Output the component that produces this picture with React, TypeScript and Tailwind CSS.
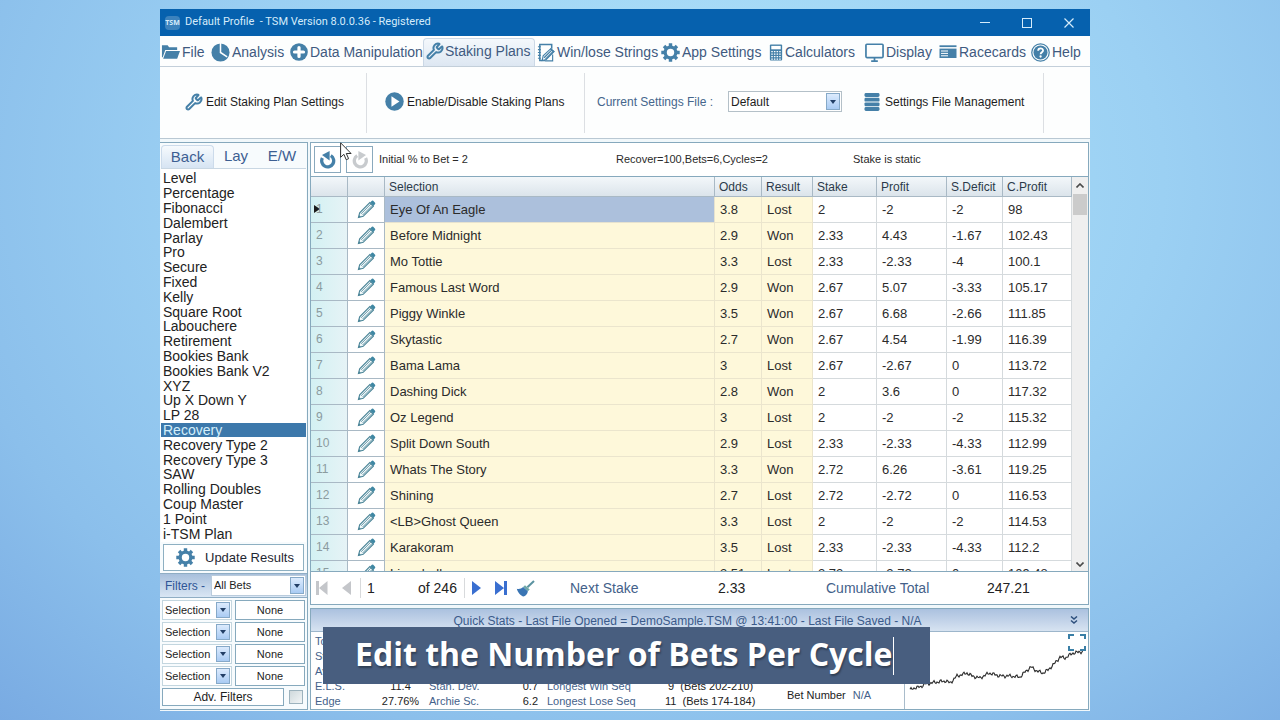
import React from "react";
import { Wrench } from "lucide-react";

type IconProps = { className?: string };

const FolderIcon = ({ className }: IconProps) => (
  <svg viewBox="0 0 20 16" className={className} fill="currentColor" aria-hidden="true">
    <path d="M1 1h6l1.500 2H17v3H4.500L1.800 13.500H1z" />
    <path d="M5.300 7H20l-3 8H2.300z" />
  </svg>
);

const PieIcon = ({ className }: IconProps) => (
  <svg viewBox="0 0 20 20" className={className} aria-hidden="true">
    <circle cx="10" cy="10" r="9.500" fill="currentColor" />
    <path d="M10 0v10l7 4.500" fill="none" stroke="#fff" strokeWidth="1.600" />
  </svg>
);

const PlusIcon = ({ className }: IconProps) => (
  <svg viewBox="0 0 20 20" className={className} aria-hidden="true">
    <circle cx="10" cy="10" r="9.800" fill="currentColor" />
    <path d="M10 5v10M5 10h10" stroke="#fff" strokeWidth="3.600" strokeLinecap="round" />
  </svg>
);

const NotepadIcon = ({ className }: IconProps) => (
  <svg viewBox="0 0 18 20" className={className} fill="none" aria-hidden="true">
    <path d="M15 6V1.500H2.500v17H8" stroke="currentColor" strokeWidth="1.600" />
    <path d="M0.500 4h3M0.500 7h3M0.500 10h3M0.500 13h3M0.500 16h3" stroke="currentColor" strokeWidth="1.200" />
    <path d="M5 18.500l1-5L14 6l3.500 3L9 17.500z" fill="#fff" stroke="currentColor" strokeWidth="1.200" />
    <path d="M7 15.500l8-8M8.500 17l8-8M13.500 6l4 3.500" stroke="currentColor" strokeWidth="1.400" />
    <path d="M8 18.800h8V12" stroke="currentColor" strokeWidth="1.200" />
  </svg>
);

const GearIcon = ({ className }: IconProps) => (
  <svg viewBox="0 0 20 20" className={className} fill="none" aria-hidden="true">
    <circle cx="10" cy="10" r="5.600" stroke="currentColor" strokeWidth="3.400" />
    <g stroke="currentColor" strokeWidth="3.600">
      <path d="M10 0.300v3M10 16.700v3M0.300 10h3M16.700 10h3" />
      <path d="M3.200 3.200l2 2M14.800 14.800l2 2M3.200 16.800l2-2M14.800 5.200l2-2" />
    </g>
  </svg>
);

const CalculatorIcon = ({ className }: IconProps) => (
  <svg viewBox="0 0 14 18" className={className} aria-hidden="true">
    <rect x="0.500" y="0.500" width="13" height="17" rx="1" fill="currentColor" />
    <rect x="2" y="2" width="10" height="3.600" fill="#fff" />
    <path d="M2 8h10M2 10.700h10M2 13.400h10M2 16h10" stroke="#fff" strokeWidth="1.300" strokeDasharray="1.600 1.200" />
  </svg>
);

const MonitorIcon = ({ className }: IconProps) => (
  <svg viewBox="0 0 20 20" className={className} fill="none" stroke="currentColor" aria-hidden="true">
    <rect x="1" y="1.300" width="18" height="14" rx="1" strokeWidth="1.800" />
    <path d="M10 15v3.500M6.500 19h7" strokeWidth="1.800" />
  </svg>
);

const CardIcon = ({ className }: IconProps) => (
  <svg viewBox="0 0 18 14" className={className} aria-hidden="true">
    <path d="M0.500 1.200h17" stroke="currentColor" strokeWidth="1.800" />
    <rect x="0.500" y="3.600" width="17" height="9.400" fill="currentColor" />
    <path d="M2 6h7M2 8.400h7M2 10.800h7" stroke="#fff" strokeWidth="1" />
  </svg>
);

const HelpIcon = ({ className }: IconProps) => (
  <svg viewBox="0 0 20 20" className={className} fill="none" aria-hidden="true">
    <circle cx="10" cy="10" r="9.200" stroke="currentColor" strokeWidth="1.300" />
    <circle cx="10" cy="10" r="7.400" fill="currentColor" />
    <path d="M7.500 8.200c0-3.400 5.200-3.300 5.200-0.300 0 1.800-2.600 2-2.600 4" stroke="#fff" strokeWidth="1.900" />
    <circle cx="10.100" cy="14.200" r="1.200" fill="#fff" />
  </svg>
);

const PlayIcon = ({ className }: IconProps) => (
  <svg viewBox="0 0 20 20" className={className} aria-hidden="true">
    <circle cx="10" cy="10" r="9.700" fill="currentColor" />
    <path d="M6.800 4.400l8.400 5.600-8.400 5.600z" fill="#fff" />
  </svg>
);

const StackIcon = ({ className }: IconProps) => (
  <svg viewBox="0 0 16 18" className={className} fill="currentColor" aria-hidden="true">
    <rect x="0.500" y="0" width="15" height="3.900" rx="1.400" />
    <rect x="0.500" y="4.700" width="15" height="3.900" rx="1.200" />
    <rect x="0.500" y="9.400" width="15" height="3.900" rx="1.200" />
    <rect x="0.500" y="14.100" width="15" height="3.900" rx="1.400" />
  </svg>
);

const TurnIcon = ({ className }: IconProps) => (
  <svg viewBox="1 1 16 18" className={className} aria-hidden="true">
    <path d="M3.400 8a6 6 0 1 0 8.400-2.300" fill="none" stroke="currentColor" strokeWidth="3.300" />
    <path d="M10.600 1v9.400L3 5z" fill="currentColor" />
  </svg>
);

const PencilIcon = ({ className }: IconProps) => (
  <svg viewBox="0 0 20 20" className={className} fill="none" aria-hidden="true">
    <path d="M1.500 18.500l1.300-5L13.500 2.800l3.700 3.700L6.500 17.200z" fill="#f4fafb" stroke="#4a8497" strokeWidth="1.200" />
    <path d="M4.200 14.600L14.600 4.200M5.700 16L16 5.700" stroke="#4a8497" strokeWidth="0.900" />
    <path d="M1.500 18.500l0.700-2.600 1.900 1.900z" fill="#4a8497" />
    <path d="M13.800 2.600L15.700 0.900q0.700-0.500 1.400 0L19 2.900q0.600 0.700 0 1.400L17.400 6.200z" fill="#3f87a3" />
  </svg>
);

const BroomIcon = ({ className }: IconProps) => (
  <svg viewBox="0 0 20 18" className={className} aria-hidden="true">
    <path d="M19 1L12 7.800" stroke="#5b93a0" strokeWidth="2.200" />
    <path d="M9.500 5.500l5 4.500-2 1.800-5-4.300z" fill="#6fa8a8" />
    <path d="M7.500 7.500l5 4.400c-0.300 2.500-2 4.600-4.500 5.600C5 17 1.500 13 0.800 9.300c2.400 0.500 5 0 6.700-1.800z" fill="#3a75b4" />
  </svg>
);

const MENU: { label: string; icon: (p: IconProps) => React.ReactElement; size: string }[] = [
  { label: "File", icon: FolderIcon, size: "w-[19px] h-4" },
  { label: "Analysis", icon: PieIcon, size: "w-[19px] h-[19px]" },
  { label: "Data Manipulation", icon: PlusIcon, size: "w-[18px] h-[18px]" },
  { label: "Staking Plans", icon: (p) => <Wrench {...p} strokeWidth={2.7} />, size: "w-[18px] h-[18px]" },
  { label: "Win/lose Strings", icon: NotepadIcon, size: "w-[18px] h-[19px]" },
  { label: "App Settings", icon: GearIcon, size: "w-[19px] h-[19px]" },
  { label: "Calculators", icon: CalculatorIcon, size: "w-[14px] h-[17px]" },
  { label: "Display", icon: MonitorIcon, size: "w-[19px] h-[19px]" },
  { label: "Racecards", icon: CardIcon, size: "w-[18px] h-[14px]" },
  { label: "Help", icon: HelpIcon, size: "w-[19px] h-[19px]" },
];

const PLANS = [
  "Level", "Percentage", "Fibonacci", "Dalembert", "Parlay", "Pro", "Secure", "Fixed", "Kelly",
  "Square Root", "Labouchere", "Retirement", "Bookies Bank", "Bookies Bank V2", "XYZ", "Up X Down Y",
  "LP 28", "Recovery", "Recovery Type 2", "Recovery Type 3", "SAW", "Rolling Doubles", "Coup Master",
  "1 Point", "i-TSM Plan",
];

const BETS: string[][] = [
  ["Eye Of An Eagle", "3.8", "Lost", "2", "-2", "-2", "98"],
  ["Before Midnight", "2.9", "Won", "2.33", "4.43", "-1.67", "102.43"],
  ["Mo Tottie", "3.3", "Lost", "2.33", "-2.33", "-4", "100.1"],
  ["Famous Last Word", "2.9", "Won", "2.67", "5.07", "-3.33", "105.17"],
  ["Piggy Winkle", "3.5", "Won", "2.67", "6.68", "-2.66", "111.85"],
  ["Skytastic", "2.7", "Won", "2.67", "4.54", "-1.99", "116.39"],
  ["Bama Lama", "3", "Lost", "2.67", "-2.67", "0", "113.72"],
  ["Dashing Dick", "2.8", "Won", "2", "3.6", "0", "117.32"],
  ["Oz Legend", "3", "Lost", "2", "-2", "-2", "115.32"],
  ["Split Down South", "2.9", "Lost", "2.33", "-2.33", "-4.33", "112.99"],
  ["Whats The Story", "3.3", "Won", "2.72", "6.26", "-3.61", "119.25"],
  ["Shining", "2.7", "Lost", "2.72", "-2.72", "0", "116.53"],
  ["<LB>Ghost Queen", "3.3", "Lost", "2", "-2", "-2", "114.53"],
  ["Karakoram", "3.5", "Lost", "2.33", "-2.33", "-4.33", "112.2"],
  ["Linenhall", "3.51", "Lost", "2.72", "-2.72", "0", "109.48"],
];

const HEADERS = ["Selection", "Odds", "Result", "Stake", "Profit", "S.Deficit", "C.Profit"];

const PROFIT_POINTS: [number, number][] = [
  [5, 58], [9, 56], [15, 55], [20, 52], [32, 50], [41, 49], [45, 51], [52, 44], [62, 41], [67, 44],
  [75, 46], [84, 41], [95, 44], [105, 44], [115, 45], [120, 40], [126, 35], [132, 39], [138, 41],
  [143, 38], [150, 31], [155, 25], [160, 26], [168, 21], [175, 20], [179, 19],
];

function profitPath(): string {
  const out: string[] = [];
  for (let i = 0; i < PROFIT_POINTS.length - 1; i++) {
    const [x0, y0] = PROFIT_POINTS[i];
    const [x1, y1] = PROFIT_POINTS[i + 1];
    for (let x = x0; x < x1; x++) {
      const wobble = Math.sin(x * 1.9) * 1.1 + Math.sin(x * 0.83) * 0.9;
      out.push(`${x} ${(y0 + ((y1 - y0) * (x - x0)) / (x1 - x0) + wobble).toFixed(1)}`);
    }
  }
  return `M${out.join("L")}`;
}

function DropArrow() {
  return (
    <span className="pointer-events-none absolute inset-y-px right-px flex w-[14px] items-center justify-center border border-[#86a9c8] bg-linear-to-b from-[#dcebfd] to-[#a9cbf3]">
      <svg viewBox="0 0 6 4" className="h-1 w-1.5" aria-hidden="true">
        <path d="M0 0h6L3 4z" fill="#223f66" />
      </svg>
    </span>
  );
}

function Combo({ label, value, className }: { label: string; value: string; className: string }) {
  return (
    <span className={`relative block border bg-white ${className}`}>
      <select aria-label={label} defaultValue={value} className="block h-full w-full appearance-none bg-transparent pl-0.5 outline-none">
        <option>{value}</option>
      </select>
      <DropArrow />
    </span>
  );
}

function TitleBar() {
  return (
    <header className="flex h-[27px] shrink-0 items-center bg-[#0661ae] pl-[5px] text-[#d5ecfb]">
      <span className="flex h-[14px] w-[15px] items-center justify-center rounded-sm bg-[#3c82bd] font-['Open_Sans',sans-serif] text-[7px] font-bold leading-none">TSM</span>
      <h1 className="ml-[5px] flex-1 whitespace-pre font-[Roboto,sans-serif] text-[11px]">Default Profile  - TSM Version 8.0.0.36 - Registered</h1>
      <div className="flex items-center">
        <button aria-label="Minimise" className="flex h-[27px] w-[42px] items-center justify-center">
          <svg viewBox="0 0 10 10" className="h-2.5 w-2.5"><path d="M0 4.500h10" stroke="currentColor" /></svg>
        </button>
        <button aria-label="Maximise" className="flex h-[27px] w-[42px] items-center justify-center">
          <svg viewBox="0 0 10 10" className="h-2.5 w-2.5" fill="none"><rect x="0.500" y="0.500" width="9" height="9" stroke="currentColor" /></svg>
        </button>
        <button aria-label="Close" className="flex h-[27px] w-[42px] items-center justify-center">
          <svg viewBox="0 0 10 10" className="h-2.5 w-2.5"><path d="M0.500 0.500l9 9M9.500 0.500l-9 9" stroke="currentColor" strokeWidth="1.200" /></svg>
        </button>
      </div>
    </header>
  );
}

function MenuBar() {
  return (
    <nav className="grid h-[31px] shrink-0 grid-cols-[50fr_79fr_133fr_114fr_124fr_108fr_96fr_74fr_92fr_59fr] border-b border-[#c3cfda] pl-px pt-0.5 text-sm text-[#3f5a80]">
      {MENU.map(({ label, icon: Icon, size }) => (
        <button
          key={label}
          className={`flex min-w-0 items-center whitespace-nowrap ${
            label === "Staking Plans"
              ? "mr-0.5 gap-px rounded-t-sm border border-b-0 border-[#cbd8e6] bg-linear-to-b from-[#f4f8fc] to-[#dde7f2] pb-[3px] pl-0.5"
              : "gap-0.5"
          }`}
        >
          <Icon className={`shrink-0 text-[#4580a8] ${size}`} />
          {label}
        </button>
      ))}
    </nav>
  );
}

function Toolbar() {
  return (
    <section className="flex h-[72px] shrink-0 items-center border-b border-[#b9c8d3] text-xs text-[#1d1d1d]">
      <div className="flex h-[60px] w-[207px] items-center justify-end border-r border-[#dcdfe3] pb-0.5 pr-[22px]">
        <button className="flex items-center gap-[3px] whitespace-nowrap">
          <Wrench className="h-[18px] w-[18px] text-[#4580a8]" strokeWidth={2.7} />
          Edit Staking Plan Settings
        </button>
      </div>
      <div className="flex h-[60px] w-[218px] items-center border-r border-[#dcdfe3] pb-0.5 pl-[18px]">
        <button className="flex items-center gap-[3px] whitespace-nowrap">
          <PlayIcon className="h-[19px] w-[19px] text-[#4580a8]" />
          Enable/Disable Staking Plans
        </button>
      </div>
      <div className="flex h-[60px] w-[459px] items-center border-r border-[#dcdfe3] pb-0.5 pl-3">
        <span className="w-[131px] whitespace-nowrap text-[#45668c]">Current Settings File :</span>
        <Combo label="Current Settings File" value="Default" className="h-[21px] w-[114px] border-[#b4c0c8]" />
        <button className="ml-[22px] flex items-center gap-[5px] whitespace-nowrap">
          <StackIcon className="h-[18px] w-4 text-[#4580a8]" />
          Settings File Management
        </button>
      </div>
    </section>
  );
}

function Sidebar() {
  return (
    <aside className="flex w-[148px] shrink-0 flex-col border border-l-0 border-[#86a9bd] bg-[#f7fbfd]">
      <div role="tablist" className="mx-px mt-0.5 flex h-6 border-b border-[#c9d7e3] text-[15px] text-[#3d5f92]">
        <button role="tab" aria-selected="true" className="w-[53px] rounded-t-sm border border-b-0 border-[#ccdbeb] bg-linear-to-b from-[#f6fafd] to-[#d6e4f3] pb-0.5">Back</button>
        <button role="tab" aria-selected="false" className="w-[44px]">Lay</button>
        <button role="tab" aria-selected="false" className="w-[48px]">E/W</button>
      </div>
      <ul className="mx-px grid min-h-0 flex-1 auto-rows-fr bg-white pb-px pt-0.5 text-sm text-[#222]">
        {PLANS.map((plan) => (
          <li key={plan} className="flex min-h-0">
            <button
              className={`flex w-full items-center whitespace-nowrap pl-0.5 leading-none ${
                plan === "Recovery" ? "bg-[#3c78ab] text-[#d4effb]" : ""
              }`}
            >
              {plan}
            </button>
          </li>
        ))}
      </ul>
      <button className="mx-[3px] my-0.5 flex h-[27px] shrink-0 items-center gap-2.5 border border-[#8eb0c2] bg-white pl-3 text-[13px] text-[#1f2733]">
        <GearIcon className="h-[19px] w-[19px] text-[#4580a8]" />
        Update Results
      </button>
      <div className="flex h-[25px] shrink-0 items-center border-y border-[#8fadc4] bg-linear-to-b from-[#a9c0dc] to-[#d9e6f4] pl-[5px] pr-px text-xs text-[#2f5596]">
        <span className="w-[46px]">Filters -</span>
        <Combo label="Filters" value="All Bets" className="h-[21px] flex-1 border-[#b9cbdc] text-[11px] text-[#1d1d1d]" />
      </div>
      <div className="flex shrink-0 flex-col gap-0.5 px-0.5 pt-0.5 text-[11px] text-[#1d1d1d]">
        {[1, 2, 3, 4].map((n) => (
          <div key={n} className="flex h-5 gap-[3px]">
            <Combo label={`Filter field ${n}`} value="Selection" className="w-[70px] border-[#c3d6df]" />
            <button className="flex-1 border border-[#86a9bd] bg-white">None</button>
          </div>
        ))}
        <div className="mb-[3px] flex h-[18px] items-center gap-[5px] pr-0.5">
          <button className="h-full flex-1 border border-[#86a9bd] bg-white text-xs leading-none">Adv. Filters</button>
          <input type="checkbox" aria-label="Use advanced filters" className="h-[14px] w-[14px] appearance-none border border-[#9cb2bd] bg-linear-to-br from-[#cfd9dc] to-[#f2f5f6]" />
        </div>
      </div>
    </aside>
  );
}

function InfoBar() {
  return (
    <div className="flex h-[34px] shrink-0 items-center border-b border-[#86a9bd] pl-[3px] text-[11px] text-[#2a2a2a]">
      <button aria-label="Undo" className="flex h-[27px] w-[27px] items-center justify-center border border-[#8aa9bd]">
        <TurnIcon className="h-[18px] w-4 text-[#4580a8]" />
      </button>
      <button aria-label="Redo" className="ml-[5px] flex h-[27px] w-[27px] items-center justify-center border border-[#8aa9bd]">
        <TurnIcon className="h-[18px] w-4 -scale-x-100 text-[#c8cbce]" />
      </button>
      <span className="ml-1.5 w-[237px]">Initial % to Bet = 2</span>
      <span className="w-[237px]">Recover=100,Bets=6,Cycles=2</span>
      <span>Stake is static</span>
    </div>
  );
}

function BetTable() {
  return (
    <div className="flex min-h-0 flex-1 overflow-hidden">
      <div className="min-w-0 flex-1 overflow-hidden">
        <table className="w-full table-fixed border-separate border-spacing-0 text-[13px] text-[#2b2b2b]">
          <colgroup>
            <col className="w-[37px]" />
            <col className="w-[37px]" />
            <col />
            <col className="w-[47px]" />
            <col className="w-[51px]" />
            <col className="w-[64px]" />
            <col className="w-[70px]" />
            <col className="w-[56px]" />
            <col className="w-[69px]" />
          </colgroup>
          <thead>
            <tr className="h-5 bg-linear-to-b from-[#f3f7fa] to-[#dae3ea] text-xs text-[#2b3a4a]">
              <th aria-label="Row" className="border-b border-r border-[#a9b9c5]" />
              <th aria-label="Edit" className="border-b border-r border-[#a9b9c5]" />
              {HEADERS.map((h) => (
                <th key={h} className="overflow-visible whitespace-nowrap border-b border-r border-[#a9b9c5] p-0 pl-1 text-left font-normal leading-none">{h}</th>
              ))}
            </tr>
          </thead>
          <tbody>
            {BETS.map((row, i) => (
              <tr key={row[0]} className="h-[26px]">
                <td className="border-b border-r border-[#a9b9c5] bg-linear-to-r from-[#d3f1f3] to-[#e6f3f6] p-0 pb-0.5 pl-[5px] text-xs leading-none text-[#8b9b9f]">
                  <span className="flex items-center">
                    {i === 0 && (
                      <svg viewBox="0 0 6 8" className="-ml-0.5 h-2 w-1.5" aria-hidden="true">
                        <path d="M0 0l6 4-6 4z" fill="#1b1b1b" />
                      </svg>
                    )}
                    <span className={i === 0 ? "-ml-1" : ""}>{i + 1}</span>
                  </span>
                </td>
                <td className="border-b border-r border-[#a9b9c5] bg-white p-0">
                  <button aria-label={`Edit ${row[0]}`} className="flex w-full justify-center">
                    <PencilIcon className="h-[19px] w-[19px]" />
                  </button>
                </td>
                {row.map((cell, c) => (
                  <td
                    key={c}
                    className={`whitespace-nowrap border-b border-r p-0 pl-[5px] leading-none ${
                      c === 0 && i === 0
                        ? "border-[#e6e2cf] bg-[#acc0dc]"
                        : c < 3
                          ? "border-[#ebe5cd] bg-[#fef8da]"
                          : "border-[#d5dadd] bg-white"
                    }`}
                  >
                    {cell}
                  </td>
                ))}
              </tr>
            ))}
          </tbody>
        </table>
      </div>
      <div className="flex w-4 shrink-0 flex-col items-center justify-between bg-[#efefef] pb-1">
        <div className="flex w-full flex-col items-center px-px">
          <svg viewBox="0 0 8 5" className="mb-1.5 mt-1.5 h-[5px] w-2" fill="none"><path d="M0.500 4.500L4 1l3.500 3.500" stroke="#4a4a4a" strokeWidth="1.600" /></svg>
          <div className="h-[21px] w-full bg-[#cbcbcb]" />
        </div>
        <svg viewBox="0 0 8 5" className="h-[5px] w-2" fill="none"><path d="M0.500 0.500L4 4 7.500 0.500" stroke="#4a4a4a" strokeWidth="1.600" /></svg>
      </div>
    </div>
  );
}

function Navigator() {
  return (
    <div className="flex h-[33px] shrink-0 items-center border-t border-[#86a9bd] text-sm leading-5 text-[#222]">
      <div className="flex w-[230px] items-center">
        <button aria-label="First" className="ml-[5px]">
          <svg viewBox="0 0 12 14" className="h-[14px] w-3"><path d="M0 0h3v14H0zM11.500 0v14L3 7z" fill="#c4c6ca" /></svg>
        </button>
        <button aria-label="Previous" className="ml-[14px]">
          <svg viewBox="0 0 9 14" className="h-[14px] w-[9px]"><path d="M9 0v14L0 7z" fill="#c4c6ca" /></svg>
        </button>
        <span className="ml-[9px] h-5 w-px bg-[#d8dadc]" />
        <input aria-label="Current row" defaultValue="1" className="ml-[6px] w-[48px] bg-transparent outline-none" />
        <span className="ml-[3px] w-[45px] whitespace-nowrap">of 246</span>
        <span className="ml-px h-5 w-px bg-[#d8dadc]" />
        <button aria-label="Next" className="ml-[7px]">
          <svg viewBox="0 0 9 14" className="h-[14px] w-[9px]"><path d="M0 0v14l9-7z" fill="#3a6fd0" /></svg>
        </button>
        <button aria-label="Last" className="ml-[14px]">
          <svg viewBox="0 0 12 14" className="h-[14px] w-3"><path d="M9 0h3v14H9zM0 0v14l9-7z" fill="#3a6fd0" /></svg>
        </button>
        <button aria-label="Clear" className="ml-[9px]">
          <BroomIcon className="h-[17px] w-[19px]" />
        </button>
      </div>
      <span className="ml-[29px] w-[148px] text-[#44618a]">Next Stake</span>
      <span className="w-[108px]">2.33</span>
      <span className="w-[161px] text-[#44618a]">Cumulative Total</span>
      <span>247.21</span>
    </div>
  );
}

const STATS: string[][] = [
  ["Total Bets", "246", "", "", "", ""],
  ["Strike Rate", "", "", "", "", ""],
  ["Avg. Odds", "", "", "", "", ""],
  ["E.L.S.", "11.4", "Stan. Dev.", "0.7", "Longest Win Seq", " 9  (Bets 202-210)"],
  ["Edge", "27.76%", "Archie Sc.", "6.2", "Longest Lose Seq", "11  (Bets 174-184)"],
];

function QuickStats() {
  return (
    <section className="relative mt-[3px] flex h-[102px] shrink-0 flex-col border border-[#86a9bd] bg-white">
      <div className="flex h-[23px] shrink-0 items-center border-b border-[#9db6cb] bg-linear-to-b from-[#abc1df] to-[#d7e3f1] pr-2.5 text-xs text-[#3a5a8a]">
        <h2 className="flex-1 pr-1.5 pt-0.5 text-center">Quick Stats - Last File Opened = DemoSample.TSM @ 13:41:00 - Last File Saved - N/A</h2>
        <button aria-label="Collapse">
          <svg viewBox="0 0 8 8" className="h-2 w-2" fill="none" stroke="#2d4f7c" strokeWidth="1.500"><path d="M1 0.500l3 2.500 3-2.500M1 4.500L4 7l3-2.500" /></svg>
        </button>
      </div>
      <div className="flex min-h-0 flex-1">
        <div className="flex min-w-0 flex-1 items-end border-r border-[#a9bccb] text-[11px]">
          <table className="w-[450px] table-fixed text-[#44618a]">
            <colgroup>
              <col className="w-[61px]" />
              <col className="w-[57px]" />
              <col className="w-[75px]" />
              <col className="w-[42px]" />
              <col className="w-[117px]" />
              <col className="w-[98px]" />
            </colgroup>
            <tbody>
              {STATS.map((row) => (
                <tr key={row[0]} className="h-[15px]">
                  {row.map((cell, c) => (
                    <td
                      key={c}
                      className={`whitespace-pre p-0 leading-none ${c === 0 ? "pl-1" : ""} ${
                        c === 1 ? "text-center text-[#222]" : c === 3 ? "pr-2 text-right text-[#222]" : c === 5 ? "pl-0.5 text-[#222]" : ""
                      } ${c === 4 ? "pl-px" : ""}`}
                    >
                      {cell}
                    </td>
                  ))}
                </tr>
              ))}
            </tbody>
          </table>
          <p className="mb-1.5 ml-[26px] whitespace-nowrap text-[#222]">
            Bet Number <span className="ml-1 text-[#44618a]">N/A</span>
          </p>
        </div>
        <div className="relative w-[183px]">
          <svg viewBox="0 0 183 77" className="h-[77px] w-full" fill="none" role="img" aria-label="Profit history">
            <path d={profitPath()} stroke="#2b2b2b" strokeWidth="1.100" />
          </svg>
          <button aria-label="Expand chart" className="absolute right-0.5 top-0.5">
            <svg viewBox="0 0 18 17" className="h-[17px] w-[18px]" fill="none" stroke="#3a7fa6" strokeWidth="2"><path d="M1 5V1h5M12 1h5v4M17 12v4h-5M6 16H1v-4" /></svg>
          </button>
        </div>
      </div>
      <div className="absolute left-3 top-[18px] flex h-[57px] w-[607px] items-center bg-[#485e7f] pl-8 font-['Open_Sans',sans-serif] text-[32px] font-bold text-white [text-shadow:1px_2px_2px_rgba(0,0,0,0.35)]">
        <span className="-mt-1 whitespace-nowrap">Edit the Number of Bets Per Cycle</span>
        <span className="ml-px h-[38px] w-px bg-white" />
      </div>
    </section>
  );
}

export default function App() {
  return (
    <div className="relative flex h-screen flex-col bg-[radial-gradient(ellipse_82%_112%_at_54%_25%,#afe3fa_0%,#9bd0f3_45%,#8bbfeb_72%,#74a5e0_100%)] pb-[9px] pl-[160px] pr-[190px] pt-[9px] font-['Liberation_Sans',Arial,sans-serif]">
      <main className="relative flex min-h-0 flex-1 flex-col bg-[#fdfefe]">
        <TitleBar />
        <MenuBar />
        <Toolbar />
        <div className="flex min-h-0 flex-1 gap-0.5 bg-[#f1f8fb] pb-px pr-px pt-[3px]">
          <Sidebar />
          <div className="flex min-w-0 flex-1 flex-col">
            <section className="flex min-h-0 flex-1 flex-col border border-[#86a9bd] bg-white">
              <InfoBar />
              <BetTable />
              <Navigator />
            </section>
            <QuickStats />
          </div>
        </div>
        <svg viewBox="0 0 12 19" className="absolute left-[180px] top-[133px] h-[19px] w-3" aria-hidden="true">
          <path d="M0.600 0.800v14.500l3.300-3 2.300 5.400 2.400-1-2.300-5.200h4.800z" fill="#fff" stroke="#333" strokeWidth="1" />
        </svg>
      </main>
    </div>
  );
}
